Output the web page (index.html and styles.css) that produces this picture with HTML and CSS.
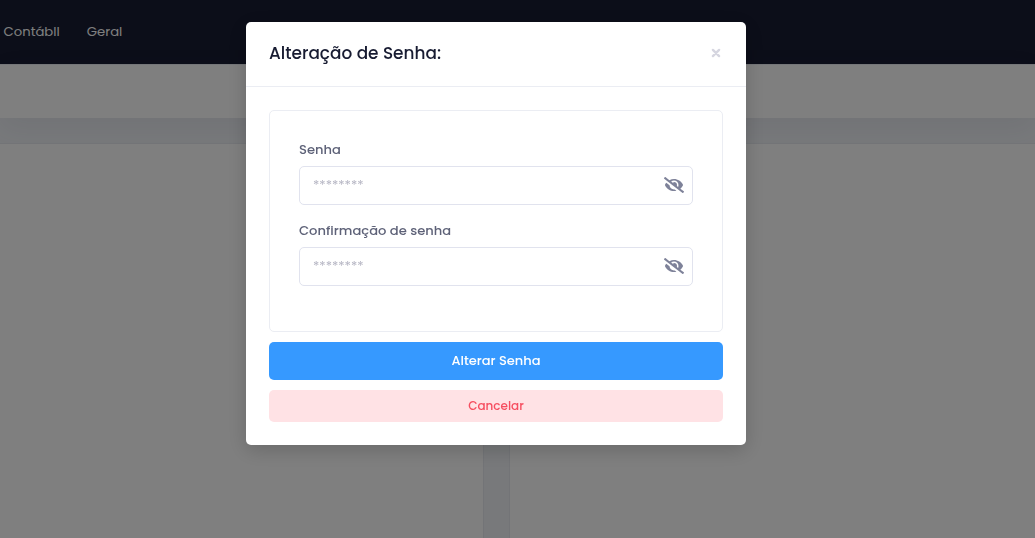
FILE: index.html
```
<!DOCTYPE html>
<html lang="pt-BR">
<head>
    <meta charset="UTF-8">
    <meta name="viewport" content="width=device-width, initial-scale=1.0">
    <title>Alteração de Senha</title>
    <link rel="stylesheet" href="styles.css">
</head>
<body>
    <div class="page">
        <header class="header">
            <a class="menu-link">Contábll</a>
            <a class="menu-link">Geral</a>
        </header>
        <div class="subheader"></div>
        <main class="content">
            <div class="card"></div>
            <div class="card"></div>
        </main>
    </div>

    <div class="backdrop">
        <div class="modal">
            <div class="modal-header">
                <h5 class="modal-title">Alteração de Senha:</h5>
                <button type="button" class="close" aria-label="Fechar">
                    <svg viewBox="0 0 10 10" width="10" height="10"><path d="M1.9 1.9l6.2 6.2M8.1 1.9L1.9 8.1"/></svg>
                </button>
            </div>
            <div class="modal-body">
                <form class="form-box">
                    <label for="senha">Senha</label>
                    <div class="field">
                        <input type="password" id="senha" placeholder="********">
                        <svg class="eye" viewBox="0 0 640 512"><use href="#eye-slash"/></svg>
                    </div>
                    <label class="label-confirm" for="confirmacao">Confirmação de senha</label>
                    <div class="field">
                        <input type="password" id="confirmacao" placeholder="********">
                        <svg class="eye" viewBox="0 0 640 512"><use href="#eye-slash"/></svg>
                    </div>
                </form>
                <button type="button" class="btn btn-primary">Alterar Senha</button>
                <button type="button" class="btn btn-danger">Cancelar</button>
            </div>
        </div>
    </div>

    <svg class="symbols">
        <symbol id="eye-slash" viewBox="0 0 640 512">
            <path d="M320 400c-75.85 0-137.25-58.71-142.9-133.11L72.2 185.82c-13.79 17.3-26.48 35.59-36.72 55.59a32.35 32.35 0 0 0 0 29.19C89.71 376.41 197.07 448 320 448c26.91 0 52.87-4 77.89-10.46L346 397.39a144.13 144.13 0 0 1-26 2.61zm313.82 58.1l-110.55-85.44a331.25 331.25 0 0 0 81.25-102.07 32.35 32.35 0 0 0 0-29.19C550.29 135.59 442.93 64 320 64a308.15 308.15 0 0 0-147.32 37.7L45.46 3.37A16 16 0 0 0 23 6.18L3.37 31.45A16 16 0 0 0 6.18 53.9l588.36 454.73a16 16 0 0 0 22.46-2.81l19.64-25.27a16 16 0 0 0-2.82-22.45zM450.7 316l-39.3-30.4A94.75 94.75 0 0 0 416 256a94.76 94.76 0 0 0-121.31-92.21A47.65 47.65 0 0 1 304 192a46.64 46.64 0 0 1-1.54 10l-73.61-56.89A142.31 142.31 0 0 1 320 112a143.92 143.92 0 0 1 144 144c0 21.63-5.29 41.79-13.3 60z"/>
        </symbol>
    </svg>
</body>
</html>
```
FILE: styles.css
```
* {
    box-sizing: border-box;
}
body {
    margin: 0;
    height: 100vh;
    overflow: hidden;
    font-family: Poppins, Inter, "Liberation Sans", sans-serif;
    font-size: 13px;
    background-color: #f0f3f7;
}
.page {
    display: flex;
    flex-direction: column;
    height: 100vh;
}
.header {
    height: 64px;
    background-color: #181c32;
    display: flex;
    align-items: center;
    gap: 27px;
    padding: 0 0 1px 3.6px;
}
.menu-link {
    color: #fff;
    font-size: 13.2px;
}
.subheader {
    height: 54px;
    background-color: #fff;
    border-top: 1px solid #ebedf3;
    box-shadow: 0 10px 30px 0 rgba(82, 63, 105, 0.08);
}
.content {
    flex: 1;
    display: grid;
    grid-template-columns: 484px 1fr;
    gap: 25px;
    padding-top: 25px;
}
.card {
    background-color: #fff;
    border: 1px solid #e6e9ef;
    border-left: none;
    border-right-width: 1px;
    border-bottom: none;
}
.card + .card {
    border-left: 1px solid #e6e9ef;
    border-right: none;
}
.backdrop {
    position: fixed;
    inset: 0;
    background-color: rgba(0, 0, 0, 0.5);
    padding: 22px 0 0 246px;
}
.modal {
    width: 500px;
    height: 423px;
    background-color: #fff;
    border-radius: 5px;
    box-shadow: 0 5px 20px rgba(0, 0, 0, 0.18);
}
.modal-header {
    height: 65px;
    display: flex;
    justify-content: space-between;
    align-items: center;
    padding: 0 25px 2px 23px;
    border-bottom: 1px solid #ebedf3;
}
.modal-title {
    margin: 0;
    font-size: 16.9px;
    font-weight: 500;
    color: #181c32;
}
.close {
    display: flex;
    padding: 0;
    border: none;
    background: none;
}
.close svg {
    fill: none;
    stroke: #d6d6e0;
    stroke-width: 2.4;
    stroke-linecap: round;
}
.modal-body {
    display: flex;
    flex-direction: column;
    padding: 23px;
}
.form-box {
    height: 222px;
    padding: 29px;
    border: 1px solid #ebedf3;
    border-radius: 5px;
    margin-bottom: 10px;
}
label {
    display: block;
    height: 20px;
    line-height: 20px;
    margin-bottom: 6px;
    color: #5e6278;
    font-size: 13.1px;
    font-weight: 500;
}
.label-confirm {
    margin-top: 16px;
}
.field {
    display: flex;
    align-items: center;
    width: 394px;
    height: 39px;
    padding: 0 8px 2px 13px;
    border: 1px solid #e1e3ee;
    border-radius: 5px;
}
.field input {
    flex: 1;
    padding: 0;
    border: none;
    outline: none;
    background: none;
    font: inherit;
}
.field input::placeholder {
    color: #b5b5c3;
}
.eye {
    width: 20px;
    height: 16px;
    fill: #7e8299;
}
.btn {
    border: none;
    border-radius: 5px;
    padding: 0;
    font-family: inherit;
    font-weight: 500;
}
.btn-primary {
    height: 38px;
    margin-bottom: 10px;
    font-size: 13px;
    color: #fff;
    background-color: #3699ff;
}
.btn-danger {
    height: 32px;
    font-size: 12px;
    color: #f64e60;
    background-color: #ffe2e5;
}
.symbols {
    display: none;
}
```
